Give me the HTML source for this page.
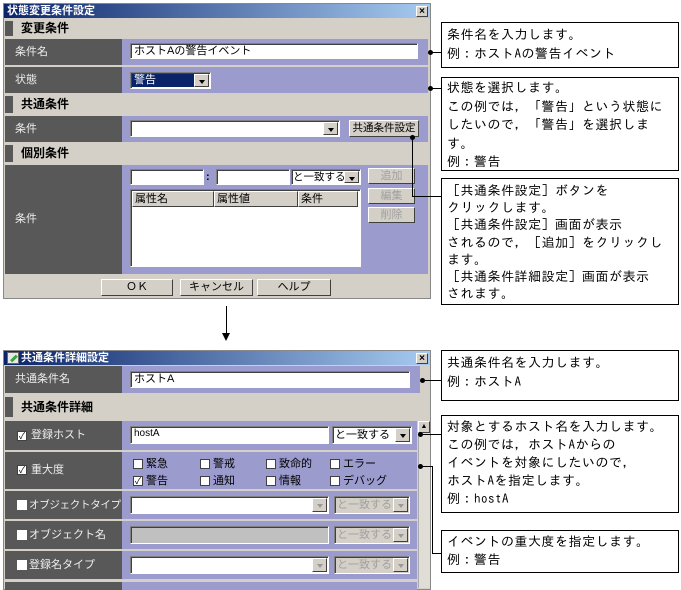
<!DOCTYPE html>
<html><head><meta charset="utf-8"><style>
*{margin:0;padding:0;box-sizing:border-box}
body{width:681px;height:588px;background:#fff;position:relative;overflow:hidden;font-family:"Liberation Sans","Noto Sans CJK JP",sans-serif;font-size:11px;color:#000}
div,span{position:absolute}
.dlg{background:#d4d0c8;border:1px solid #888}
.tb{background:linear-gradient(90deg,#0a246a,#a6caf0);color:#fff;font-weight:bold;font-size:11px;line-height:14px;padding-left:3px}
.x{background:#d4d0c8;border:1px solid;border-color:#fff #404040 #404040 #fff;width:12px;height:11px;font-size:10px;line-height:9px;text-align:center;color:#000;font-weight:bold}
.lab{background:#585858;color:#eee;padding-left:10px;font-size:11px;white-space:nowrap}
.pur{background:#9b9bce}
.sec{font-weight:bold;font-size:12px;padding-left:16px}
.sec:before{content:"";position:absolute;left:0;top:2px;bottom:2px;width:8px;background:#585858}
.in{background:#fff;border:1px solid;border-color:#808080 #fff #fff #808080;box-shadow:inset 1px 1px 0 #404040;font-size:11px;line-height:14px;padding-left:3px;white-space:nowrap}
.btn{background:#d4d0c8;border:1px solid;border-color:#fff #404040 #404040 #fff;text-align:center;font-size:11px;line-height:14px}
.dis{color:#a0a0a0}
.dd{width:15px;background:#d4d0c8;border:1px solid;border-color:#fff #404040 #404040 #fff;top:1px;bottom:1px;right:1px}
.dd:after{content:"";position:absolute;left:4px;top:5px;border:3px solid transparent;border-top:4px solid #000}
.ddd:after{border-top-color:#999}
.box{border:1px solid #000;background:#fff;font-family:"IPAGothic","Noto Sans CJK JP",sans-serif;font-size:13px;letter-spacing:0.5px;line-height:18px;padding:2px 0 0 5px;white-space:nowrap}
.ln{background:#000}
.dot{width:5px;height:5px;border-radius:50%;background:#000}
.cb{width:10px;height:10px;background:#fff;border:1px solid #404040;font-size:9px;line-height:8px;text-align:center;color:#000}
.ck{font-size:11px;line-height:12px}
</style></head><body>

<div class="dlg" style="left:3px;top:3px;width:428px;height:296px"></div>
<div class="tb" style="left:4px;top:4px;width:426px;height:14px">状態変更条件設定</div>
<div class="x" style="left:416px;top:6px">×</div>
<div class="sec" style="left:5px;top:19px;width:420px;height:19px;line-height:19px">変更条件</div>
<div class="lab" style="left:5px;top:39px;width:117px;height:26px;line-height:26px">条件名</div>
<div class="pur" style="left:122px;top:39px;width:306px;height:26px"></div>
<div class="in" style="left:130px;top:43px;width:288px;height:16px">ホストAの警告イベント</div>
<div class="lab" style="left:5px;top:67px;width:117px;height:26px;line-height:26px">状態</div>
<div class="pur" style="left:122px;top:67px;width:306px;height:26px"></div>
<div class="in" style="left:130px;top:72px;width:81px;height:17px;padding:0"><span style="left:1px;top:1px;width:62px;height:13px;background:#0a246a;color:#fff;line-height:13px;padding-left:2px">警告</span><div class="dd"></div></div>
<div class="sec" style="left:5px;top:94px;width:420px;height:21px;line-height:21px">共通条件</div>
<div class="lab" style="left:5px;top:116px;width:117px;height:26px;line-height:26px">条件</div>
<div class="pur" style="left:122px;top:116px;width:306px;height:26px"></div>
<div class="in" style="left:130px;top:120px;width:210px;height:17px"><div class="dd"></div></div>
<div class="btn" style="left:349px;top:120px;width:70px;height:17px;line-height:15px;font-size:10.5px">共通条件設定</div>
<div class="sec" style="left:5px;top:143px;width:420px;height:21px;line-height:21px">個別条件</div>
<div class="lab" style="left:5px;top:165px;width:117px;height:109px;line-height:109px">条件</div>
<div class="pur" style="left:122px;top:165px;width:306px;height:109px"></div>
<div class="in" style="left:130px;top:169px;width:74px;height:16px"></div>
<span style="left:206px;top:169px;font-weight:bold;line-height:16px">:</span>
<div class="in" style="left:216px;top:169px;width:74px;height:16px"></div>
<div class="in" style="left:291px;top:169px;width:70px;height:16px;padding:0 0 0 1px;font-size:10.5px">と一致する<div class="dd"></div></div>
<div class="btn dis" style="left:368px;top:168px;width:47px;height:16px">追加</div>
<div class="btn dis" style="left:368px;top:188px;width:47px;height:16px">編集</div>
<div class="btn dis" style="left:368px;top:207px;width:47px;height:16px">削除</div>
<div class="in" style="left:130px;top:189px;width:231px;height:78px;padding:0">
 <div class="btn" style="left:1px;top:1px;width:82px;height:16px;text-align:left;padding-left:2px">属性名</div>
 <div class="btn" style="left:83px;top:1px;width:84px;height:16px;text-align:left;padding-left:2px">属性値</div>
 <div class="btn" style="left:167px;top:1px;width:60px;height:16px;text-align:left;padding-left:2px">条件</div>
</div>
<div class="btn" style="left:101px;top:279px;width:72px;height:17px">ＯＫ</div>
<div class="btn" style="left:180px;top:279px;width:73px;height:17px">キャンセル</div>
<div class="btn" style="left:257px;top:279px;width:74px;height:17px">ヘルプ</div>

<div class="box" style="left:441px;top:22px;width:238px;height:46px;line-height:19px">条件名を入力します。<br>例：ホストAの警告イベント</div>
<div class="dot" style="left:428px;top:50px"></div><div class="ln" style="left:430px;top:52px;width:11px;height:1px"></div>
<div class="box" style="left:441px;top:77px;width:238px;height:94px;line-height:18.5px;padding-top:1px">状態を選択します。<br>この例では，「警告」という状態に<br>したいので，「警告」を選択しま<br>す。<br>例：警告</div>
<div class="dot" style="left:428px;top:86px"></div><div class="ln" style="left:430px;top:88px;width:11px;height:1px"></div>
<div class="box" style="left:441px;top:178px;width:238px;height:127px;line-height:17.2px;padding-top:3px">［共通条件設定］ボタンを<br>クリックします。<br>［共通条件設定］画面が表示<br>されるので，［追加］をクリックし<br>ます。<br>［共通条件詳細設定］画面が表示<br>されます。</div>
<div class="dot" style="left:410px;top:135px"></div>
<div class="ln" style="left:412px;top:137px;width:1px;height:60px"></div>
<div class="ln" style="left:412px;top:196px;width:29px;height:1px"></div>

<div class="ln" style="left:226px;top:306px;width:1px;height:28px"></div>
<div style="left:222px;top:333px;border:4px solid transparent;border-top:8px solid #000"></div>

<div class="dlg" style="left:3px;top:350px;width:428px;height:240px"></div>
<div class="tb" style="left:4px;top:351px;width:426px;height:14px;padding-left:17px"><span style="left:3px;top:1px;width:12px;height:12px;background:#e8e8e8;border:1px solid #666"><span style="left:2px;top:4px;width:8px;height:3px;background:#3a3;transform:rotate(-45deg)"></span></span>共通条件詳細設定</div>
<div class="x" style="left:416px;top:353px">×</div>
<div class="lab" style="left:5px;top:366px;width:117px;height:27px;line-height:27px">共通条件名</div>
<div class="pur" style="left:122px;top:366px;width:298px;height:27px"></div>
<div class="in" style="left:130px;top:371px;width:280px;height:17px">ホストA</div>
<div class="sec" style="left:5px;top:395px;width:420px;height:24px;line-height:24px">共通条件詳細</div>

<div class="lab" style="left:5px;top:421px;width:117px;height:29px;line-height:29px"><span class="cb" style="left:12px;top:10px">✓</span><span style="left:26px;top:0">登録ホスト</span></div>
<div class="pur" style="left:122px;top:421px;width:295px;height:29px"></div>
<div class="in" style="left:130px;top:426px;width:199px;height:18px;font-size:10px">hostA</div>
<div class="in" style="left:332px;top:426px;width:80px;height:18px;padding:0 0 0 2px;line-height:16px">と一致する<div class="dd"></div></div>

<div class="lab" style="left:5px;top:452px;width:117px;height:37px;line-height:37px"><span class="cb" style="left:12px;top:13px">✓</span><span style="left:26px;top:0">重大度</span></div>
<div class="pur" style="left:122px;top:452px;width:295px;height:37px"></div>
<span class="cb" style="left:133px;top:459px"></span><span class="ck" style="left:146px;top:458px">緊急</span>
<span class="cb" style="left:200px;top:459px"></span><span class="ck" style="left:213px;top:458px">警戒</span>
<span class="cb" style="left:266px;top:459px"></span><span class="ck" style="left:279px;top:458px">致命的</span>
<span class="cb" style="left:330px;top:459px"></span><span class="ck" style="left:343px;top:458px">エラー</span>
<span class="cb" style="left:133px;top:476px">✓</span><span class="ck" style="left:146px;top:475px">警告</span>
<span class="cb" style="left:200px;top:476px"></span><span class="ck" style="left:213px;top:475px">通知</span>
<span class="cb" style="left:266px;top:476px"></span><span class="ck" style="left:279px;top:475px">情報</span>
<span class="cb" style="left:330px;top:476px"></span><span class="ck" style="left:343px;top:475px">デバッグ</span>

<div class="lab" style="left:5px;top:491px;width:117px;height:28px;line-height:28px;font-size:10.5px"><span class="cb" style="left:12px;top:9px;border-color:#fff"></span><span style="left:24px;top:0;letter-spacing:-0.3px">オブジェクトタイプ</span></div>
<div class="pur" style="left:122px;top:491px;width:295px;height:28px"></div>
<div class="in" style="left:130px;top:496px;width:199px;height:18px"><div class="dd ddd"></div></div>
<div class="in dis" style="left:334px;top:496px;width:76px;height:18px;padding:0 0 0 2px;line-height:16px;background:#d4d0c8">と一致する<div class="dd ddd"></div></div>

<div class="lab" style="left:5px;top:521px;width:117px;height:28px;line-height:28px"><span class="cb" style="left:12px;top:9px;border-color:#fff"></span><span style="left:24px;top:0">オブジェクト名</span></div>
<div class="pur" style="left:122px;top:521px;width:295px;height:28px"></div>
<div class="in" style="left:130px;top:526px;width:199px;height:18px;background:#c0c0c0"></div>
<div class="in dis" style="left:334px;top:526px;width:76px;height:18px;padding:0 0 0 2px;line-height:16px;background:#d4d0c8">と一致する<div class="dd ddd"></div></div>

<div class="lab" style="left:5px;top:551px;width:117px;height:28px;line-height:28px"><span class="cb" style="left:12px;top:9px;border-color:#fff"></span><span style="left:24px;top:0">登録名タイプ</span></div>
<div class="pur" style="left:122px;top:551px;width:295px;height:28px"></div>
<div class="in" style="left:130px;top:556px;width:199px;height:18px"><div class="dd ddd"></div></div>
<div class="in dis" style="left:334px;top:556px;width:76px;height:18px;padding:0 0 0 2px;line-height:16px;background:#d4d0c8">と一致する<div class="dd ddd"></div></div>
<div class="lab" style="left:5px;top:582px;width:117px;height:8px"></div>
<div class="pur" style="left:122px;top:582px;width:295px;height:8px"></div>

<div style="left:418px;top:421px;width:12px;height:167px;background:#e0ddd6;border-left:1px solid #aaa"></div>
<div class="btn" style="left:418px;top:421px;width:12px;height:12px;font-size:7px;line-height:9px">▲</div>

<div class="box" style="left:441px;top:350px;width:238px;height:51px;line-height:19px">共通条件名を入力します。<br>例：ホストA</div>
<div class="dot" style="left:420px;top:378px"></div><div class="ln" style="left:422px;top:380px;width:19px;height:1px"></div>
<div class="box" style="left:441px;top:415px;width:238px;height:98px;line-height:18px">対象とするホスト名を入力します。<br>この例では，ホストAからの<br>イベントを対象にしたいので，<br>ホストAを指定します。<br>例：hostA</div>
<div class="dot" style="left:418px;top:432px"></div><div class="ln" style="left:420px;top:434px;width:21px;height:1px"></div>
<div class="box" style="left:441px;top:530px;width:238px;height:43px;line-height:18px">イベントの重大度を指定します。<br>例：警告</div>
<div class="dot" style="left:418px;top:464px"></div>
<div class="ln" style="left:420px;top:466px;width:13px;height:1px"></div>
<div class="ln" style="left:432px;top:466px;width:1px;height:88px"></div>
<div class="ln" style="left:432px;top:553px;width:9px;height:1px"></div>
</body></html>
